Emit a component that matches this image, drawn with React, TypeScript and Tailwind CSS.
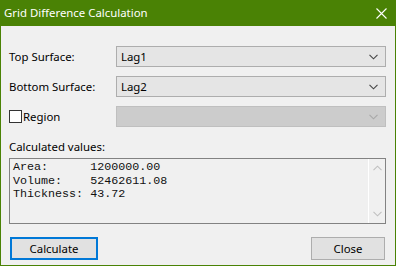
import React from "react";

const ui = { fontFamily: '"Segoe UI", "Noto Sans", "Open Sans", sans-serif' };
const mono = { fontFamily: '"Courier New", "Liberation Mono", monospace' };

function Chevron({ color }: { color: string }) {
  return (
    <svg width="9" height="6" viewBox="0 0 9 6">
      <path d="M0.5 0.8 L4.5 4.8 L8.5 0.8" fill="none" stroke={color} strokeWidth="1.1" />
    </svg>
  );
}

function Combo({ value, disabled }: { value?: string; disabled?: boolean }) {
  return (
    <div
      className={
        "flex-1 h-[21px] flex items-center justify-between pl-[4px] pr-[7px] border " +
        (disabled ? "bg-[#cccccc] border-[#bfbfbf]" : "bg-[#e5e5e5] border-[#adadad]")
      }
    >
      <span className="text-[11.4px] text-black leading-none">{value}</span>
      <Chevron color={disabled ? "#a8a8a8" : "#444444"} />
    </div>
  );
}

export default function App() {
  return (
    <div className="w-[396px] h-[266px] bg-[#4a8205] flex flex-col" style={ui}>
      <div className="h-[26px] flex items-center justify-between pl-[4px] pr-[9px] text-white">
        <span className="text-[11.4px] leading-none">Grid Difference Calculation</span>
        <svg width="11" height="11" viewBox="0 0 11 11">
          <path d="M0.5 0.5 L10.5 10.5 M10.5 0.5 L0.5 10.5" stroke="white" strokeWidth="1.1" />
        </svg>
      </div>
      <div className="flex-1 mx-px mb-px bg-[#f0f0f0] flex flex-col pl-[8px] pr-[9px] pt-[20px] text-[11.4px] text-black">
        <div className="flex items-center">
          <span className="w-[107px]">Top Surface:</span>
          <Combo value="Lag1" />
        </div>
        <div className="flex items-center mt-[9px]">
          <span className="w-[107px]">Bottom Surface:</span>
          <Combo value="Lag2" />
        </div>
        <div className="flex items-center mt-[9px]">
          <div className="w-[107px] flex items-center">
            <div className="w-[13px] h-[13px] border border-[#333333] bg-white mr-[1px]" />
            <span>Region</span>
          </div>
          <Combo disabled />
        </div>
        <div className="mt-[12px] leading-[16px]">Calculated values:</div>
        <div className="mt-[3px] h-[66px] border border-[#828282] flex">
          <div className="flex-1 pl-[3px] pt-[2px] text-[11.7px] leading-[13.5px] whitespace-pre text-[#111111]" style={mono}>
            {"Area:      1200000.00\nVolume:    52462611.08\nThickness: 43.72"}
          </div>
          <div className="w-[17px] border-l border-white flex flex-col items-center justify-between py-[6px]">
            <svg width="9" height="6" viewBox="0 0 9 6">
              <path d="M0.5 5.2 L4.5 1.2 L8.5 5.2" fill="none" stroke="#c0c0c0" strokeWidth="1.1" />
            </svg>
            <Chevron color="#c0c0c0" />
          </div>
        </div>
        <div className="mt-[13px] flex justify-between items-center">
          <button className="w-[88px] h-[23px] border-2 border-[#0078d7] bg-[#e1e1e1] text-[11.4px] ml-[1px]" style={ui}>
            Calculate
          </button>
          <button className="w-[74px] h-[23px] border border-[#adadad] bg-[#e1e1e1] text-[11.4px] mr-[1px]" style={ui}>
            Close
          </button>
        </div>
      </div>
    </div>
  );
}
